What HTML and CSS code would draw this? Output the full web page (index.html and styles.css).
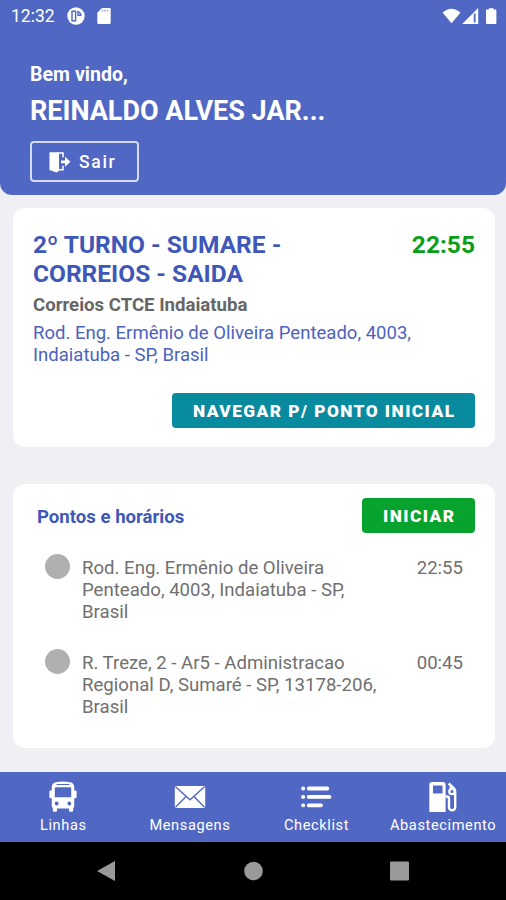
FILE: index.html
```html
<!DOCTYPE html>
<html lang="pt-BR">
<head>
<meta charset="utf-8">
<title>Pontos e horários</title>
<link rel="stylesheet" href="styles.css">
</head>
<body>
<header class="header">
  <div class="status">
    <span class="clock">12:32</span>
    <svg class="status-app" width="18" height="18" viewBox="0 0 18 18"><circle cx="9" cy="9" r="8.700" fill="#fff"/><path d="M5 4.200v9.600h3.600V4.200zM11 4.600v3.600h2.800A4 4 0 0 0 11 4.600z" fill="none" stroke="#5068c3" stroke-width="1.400"/></svg>
    <svg class="status-sd" width="14" height="16" viewBox="0 0 14 16"><path d="M5 0h7.500A1.200 1.200 0 0 1 13.700 1.200v13.600a1.200 1.200 0 0 1-1.200 1.200h-11A1.200 1.200 0 0 1 .3 14.800V4.800z" fill="#fff"/><path d="M5.500 1.800v1.800M8 1.800v1.800M10.500 1.800v1.800" stroke="#8e9edb" stroke-width="1.300"/></svg>
    <svg class="status-right" width="56" height="17" viewBox="0 0 56 17"><path d="M.5 4.600Q9.500-3 18.500 4.600L9.500 15.300z" fill="#fff"/><path d="M36.200 0v16H20.200z" fill="#fff"/><path d="M32.700 5.500v9" fill="none" stroke="#5068c3" stroke-width="1.800"/><path d="M46.800 1.500V.3h4.800v1.200h1.700a1.100 1.100 0 0 1 1.100 1.100v12.300a1.100 1.100 0 0 1-1.100 1.100h-8.200a1.100 1.100 0 0 1-1.100-1.100V2.600a1.100 1.100 0 0 1 1.100-1.100z" fill="#fff"/></svg>
  </div>
  <p class="welcome">Bem vindo,</p>
  <h1 class="name">REINALDO ALVES JAR...</h1>
  <button class="logout">
    <svg width="22" height="22" viewBox="0 0 22 22"><path d="M.5 1.200h8l1.500 1.200v17.600l-2.500 1.500L.5 19z" fill="#fff"/><path d="M8 1.900h6v4.300M9 18.800h5v-4" fill="none" stroke="#fff" stroke-width="1.500"/><path d="M12 9.400h4V5.800l5.500 5-5.500 5v-3.600h-4z" fill="#fff"/></svg>
    <span>Sair</span>
  </button>
</header>
<main class="content">
  <section class="card trip">
    <div class="trip-head">
      <h2 class="trip-title">2º TURNO - SUMARE -<br>CORREIOS - SAIDA</h2>
      <span class="trip-time">22:55</span>
    </div>
    <p class="trip-place">Correios CTCE Indaiatuba</p>
    <p class="trip-address">Rod. Eng. Ermênio de Oliveira Penteado, 4003,<br>Indaiatuba - SP, Brasil</p>
    <button class="btn navigate"><span>NAVEGAR P/ PONTO INICIAL</span></button>
  </section>
  <section class="card stops">
    <div class="stops-head">
      <h3 class="stops-title">Pontos e horários</h3>
      <button class="btn start"><span>INICIAR</span></button>
    </div>
    <ul class="stop-list">
      <li class="stop"><i class="dot"></i><p class="stop-address">Rod. Eng. Ermênio de Oliveira<br>Penteado, 4003, Indaiatuba - SP,<br>Brasil</p><time class="stop-time">22:55</time></li>
      <li class="stop"><i class="dot"></i><p class="stop-address">R. Treze, 2 - Ar5 - Administracao<br>Regional D, Sumaré - SP, 13178-206,<br>Brasil</p><time class="stop-time">00:45</time></li>
    </ul>
  </section>
</main>
<nav class="tabs">
  <a class="tab"><svg width="32" height="32" viewBox="0 0 32 32"><path fill="#fff" fill-rule="evenodd" d="M9 1.200Q16-.3 23 1.200Q27 2 27.200 6V9.500h1.200a1.200 1.200 0 0 1 1.200 1.200V16a1.200 1.200 0 0 1-1.200 1.200h-1.200v8.300a1.500 1.500 0 0 1-1 1.400V29.500a1.200 1.200 0 0 1-1.200 1.200h-1.800a1.200 1.200 0 0 1-1.200-1.200V27.500H10v2a1.200 1.200 0 0 1-1.200 1.200H7a1.200 1.200 0 0 1-1.200-1.200v-2.600a1.500 1.500 0 0 1-1-1.400V17.200H3.600A1.200 1.200 0 0 1 2.400 16v-5.300a1.200 1.200 0 0 1 1.200-1.200h1.200V6Q5 2 9 1.200zM9.500 3v1h13V3zM8.800 6.200a1 1 0 0 0-1 1V16.300h16.400V7.200a1 1 0 0 0-1-1zM9.700 20.600a1.900 1.900 0 1 0 0 3.800 1.900 1.900 0 0 0 0-3.800zm12.600 0a1.900 1.900 0 1 0 0 3.800 1.900 1.900 0 0 0 0-3.800z"/></svg><span>Linhas</span></a>
  <a class="tab"><svg width="32" height="32" viewBox="0 0 32 32"><rect x=".8" y="5" width="30.400" height="22" rx="1.500" fill="#fff"/><path d="M1.500 5.800L16 18.800 30.500 5.800M1.500 26.200L12 15.500M30.500 26.200L20 15.500" fill="none" stroke="#5068c3" stroke-width="1.400"/></svg><span>Mensagens</span></a>
  <a class="tab"><svg width="32" height="32" viewBox="0 0 32 32"><g stroke="#fff" stroke-width="3.800" stroke-linecap="round"><path d="M8.700 7.500h18.600M8.700 15.900h20.800M8.700 24.300h12.300"/><path d="M3 7.500h.3M3 15.900h.3M3 24.300h.3"/></g></svg><span>Checklist</span></a>
  <a class="tab"><svg width="32" height="32" viewBox="0 0 32 32"><path fill="#fff" fill-rule="evenodd" d="M5.200 1h10.600a2.800 2.800 0 0 1 2.800 2.800V31H2.300V3.800A2.900 2.900 0 0 1 5.200 1zM6 4.600v7.800h9.500V4.600z"/><path d="M18.500 15.500h1.300q2.200 0 2.200 2.200v8.500a3.100 3.100 0 0 0 6.200 0V10.500q0-2-1.500-3.500l-5-4.500" fill="none" stroke="#fff" stroke-width="2.400"/><path d="M23.800 4.500v3.500" fill="none" stroke="#fff" stroke-width="2.200"/><circle cx="25" cy="10.500" r="2.700" fill="none" stroke="#fff" stroke-width="2.300"/></svg><span>Abastecimento</span></a>
</nav>
<div class="sysnav">
  <svg width="506" height="58" viewBox="0 0 506 58"><g fill="#999"><path d="M97 29L115 19v20z"/><circle cx="253.500" cy="29" r="9.300"/><rect x="390" y="19.500" width="19" height="19" rx="1"/></g></svg>
</div>
</body>
</html>
```
FILE: styles.css
```css
* { box-sizing: border-box; }
body, p, h1, h2, h3, ul { margin: 0; padding: 0; }
body {
  width: 506px;
  height: 900px;
  display: flex;
  flex-direction: column;
  overflow: hidden;
  background: #f0f0f4;
  font-family: Roboto, "Liberation Sans", sans-serif;
}
button { font-family: inherit; border: 0; padding: 0; }
svg { display: block; flex: none; }
.header {
  height: 195px;
  flex: none;
  padding: 0 30px;
  background: #5068c3;
  border-radius: 0 0 12px 12px;
  color: #fff;
}
.status {
  display: flex;
  align-items: center;
  height: 32px;
  margin: 0 -22px 0 -19px;
}
.clock { width: 56px; font-size: 17.500px; }
.status-sd { margin-left: 12px; }
.status-right { margin-left: auto; margin-right: 0; }
.welcome { margin-top: 31px; font-size: 19.500px; line-height: 24px; font-weight: 700; letter-spacing: .05px; }
.name { margin-top: 7px; font-size: 27px; line-height: 34px; font-weight: 700; white-space: nowrap; }
.logout {
  display: flex;
  align-items: center;
  gap: 8px;
  width: 109px;
  height: 41px;
  margin-top: 13px;
  padding-left: 17px;
  border: 2px solid #d3dbfa;
  border-radius: 4px;
  background: transparent;
  color: #fff;
  font-size: 17.500px;
  font-weight: 500;
  letter-spacing: 1.700px;
}
.content { flex: 1; padding: 13px 11px 0 13px; }
.card { background: #fff; border-radius: 12px; }
.trip { height: 239px; padding: 22px 20px 0; display: flex; flex-direction: column; }
.trip-head { display: flex; justify-content: space-between; }
.trip-title, .trip-time { font-size: 24.500px; line-height: 29px; font-weight: 700; }
.trip-title { color: #3f57b8; }
.trip-time { color: #0a9e1a; }
.trip-place { margin-top: 5px; font-size: 18.600px; line-height: 24px; font-weight: 700; color: #666; white-space: nowrap; }
.trip-address { margin-top: 5px; font-size: 18.550px; line-height: 22px; color: #4d62bf; white-space: nowrap; }
.btn { display: flex; align-items: center; justify-content: center; height: 35px; border-radius: 4px; color: #fff; font-size: 17.300px; font-weight: 900; letter-spacing: 1.450px; }
.btn span { margin-right: -1.450px; }
.navigate { width: 303px; margin: 27px 0 0 auto; background: #088a9f; white-space: nowrap; }
.stops { height: 264px; margin-top: 37px; padding: 14px 20px 0 24px; }
.stops-head { display: flex; align-items: center; justify-content: space-between; }
.stops-title { padding-top: 3px; font-size: 18.600px; font-weight: 700; color: #3f57b8; }
.start { width: 113px; background: #08a32f; }
.stop-list { list-style: none; padding: 25px 12px 0 8px; }
.stop { display: flex; height: 95px; }
.dot { width: 25px; height: 25px; margin: -4px 12px 0 0; border-radius: 50%; background: #b0b0b0; }
.stop-address, .stop-time { font-size: 18.600px; line-height: 21.800px; color: #707070; white-space: nowrap; }
.stop-time { margin-left: auto; }
.tabs { flex: none; display: grid; grid-template-columns: repeat(4, 126.600px); height: 70px; background: #5068c3; color: #fff; }
.tab { display: flex; flex-direction: column; align-items: center; padding-top: 9px; font-size: 14.600px; line-height: 24px; letter-spacing: .6px; }
.sysnav { flex: none; height: 58px; background: #000; }
```
